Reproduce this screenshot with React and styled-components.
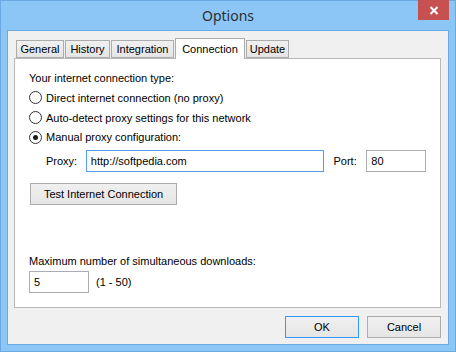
import React from 'react';
import styled, {createGlobalStyle} from "styled-components"

const GlobalStyle = createGlobalStyle`
  html, body {
    margin: 0;
    padding: 0;
    background: #ffffff;
  }
  body {
    font-family: "Liberation Sans", Arial, sans-serif;
    font-size: 11px;
    color: #000;
  }
`
const Window = styled.div`
  position: relative;
  width: 456px;
  height: 352px;
  box-sizing: border-box;
  background: #8cc6f7;
  border: 1px solid #6aa9e2;
  display: flex;
  flex-direction: column;
`
const TitleBar = styled.div`
  position: relative;
  height: 29px;
  display: flex;
  align-items: center;
  justify-content: center;
`
const Title = styled.span`
  font-family: "Noto Sans", "Open Sans", sans-serif;
  font-size: 14px;
  color: #2e2e2e;
  margin-top: -1px;
`
const CloseButton = styled.div`
  position: absolute;
  top: -1px;
  right: 6px;
  width: 31px;
  height: 20px;
  background: #c75050;
  display: flex;
  align-items: center;
  justify-content: center;
`
const Body = styled.div`
  flex: 1;
  margin: 0 6px 6px 6px;
  border: 1px solid #6aa9e2;
  background: #f0f0f0;
  padding: 7px 7px 0 6px;
  display: flex;
  flex-direction: column;
`
const TabStrip = styled.div`
  display: flex;
  align-items: flex-end;
  padding-left: 2px;
`
const Tab = styled.div`
  position: relative;
  box-sizing: border-box;
  width: ${p => p.w}px;
  height: ${p => (p.active ? 21 : 18)}px;
  margin-bottom: ${p => (p.active ? -1 : 0)}px;
  margin-right: 1px;
  z-index: ${p => (p.active ? 2 : 1)};
  border: 1px solid #acacac;
  border-bottom: ${p => (p.active ? "none" : "1px solid #acacac")};
  background: ${p => (p.active ? "#ffffff" : "linear-gradient(#f0f0f0, #e5e5e5)")};
  display: flex;
  justify-content: center;
  align-items: ${p => (p.active ? "flex-start" : "center")};
  padding-top: ${p => (p.active ? 2 : 0)}px;
  white-space: nowrap;
  line-height: 16px;
`
const Panel = styled.div`
  height: 250px;
  box-sizing: border-box;
  background: #ffffff;
  border: 1px solid #b9b9b9;
  padding: 10px 14px 14px 14px;
  display: flex;
  flex-direction: column;
`
const Label = styled.div`
  height: 18px;
  line-height: 18px;
  white-space: nowrap;
`
const RadioRow = styled.div`
  height: ${p => p.h}px;
  display: flex;
  align-items: center;
  white-space: nowrap;
`
const RadioCircle = styled.span`
  box-sizing: border-box;
  width: 13px;
  height: 13px;
  border-radius: 50%;
  border: 1px solid #333333;
  background: #ffffff;
  margin-right: 4px;
  display: flex;
  align-items: center;
  justify-content: center;

  &::after {
    content: "";
    display: ${p => (p.checked ? "block" : "none")};
    width: 5px;
    height: 5px;
    border-radius: 50%;
    background: #1a1a1a;
  }
`
const ProxyRow = styled.div`
  margin-top: 3px;
  display: flex;
  align-items: center;
  padding-left: 17px;
`
const FieldLabel = styled.span`
  width: ${p => p.w}px;
  margin-left: ${p => p.ml || 0}px;
`
const Input = styled.div`
  box-sizing: border-box;
  width: ${p => p.w}px;
  height: 22px;
  border: 1px solid ${p => (p.focused ? "#569de5" : "#abadb3")};
  background: #ffffff;
  padding-left: 4px;
  display: flex;
  align-items: center;
  white-space: nowrap;
`
const Button = styled.div`
  box-sizing: border-box;
  width: ${p => p.w}px;
  height: 22px;
  border: 1px solid ${p => (p.primary ? "#3399ff" : "#acacac")};
  background: linear-gradient(#f0f0f0, #e5e5e5);
  display: flex;
  align-items: center;
  justify-content: center;
  white-space: nowrap;
`
const TestButton = styled(Button)`
  margin-top: 11px;
  margin-left: 1px;
`
const Downloads = styled.div`
  margin-top: auto;
`
const InlineRow = styled.div`
  margin-top: 1px;
  display: flex;
  align-items: center;
  gap: 7px;
`
const Footer = styled.div`
  display: flex;
  justify-content: flex-end;
  gap: 8px;
  margin-top: 8px;
`

const App = () => {
    const tabs = [
        {name: "General", w: 48},
        {name: "History", w: 45},
        {name: "Integration", w: 63},
        {name: "Connection", w: 70, active: true},
        {name: "Update", w: 43},
    ]
    return (
        <>
            <GlobalStyle/>
            <Window>
                <TitleBar>
                    <Title>Options</Title>
                    <CloseButton>
                        <svg width="10" height="9" viewBox="0 0 10 9">
                            <path d="M1.5 1 L8.5 8 M8.5 1 L1.5 8" stroke="#fff" strokeWidth="2"/>
                        </svg>
                    </CloseButton>
                </TitleBar>
                <Body>
                    <TabStrip>
                        {tabs.map(t => (
                            <Tab key={t.name} w={t.w} active={t.active}>{t.name}</Tab>
                        ))}
                    </TabStrip>
                    <Panel>
                        <Label>Your internet connection type:</Label>
                        <RadioRow h={21}><RadioCircle/>Direct internet connection (no proxy)</RadioRow>
                        <RadioRow h={19}><RadioCircle/>Auto-detect proxy settings for this network</RadioRow>
                        <RadioRow h={20}><RadioCircle checked/>Manual proxy configuration:</RadioRow>
                        <ProxyRow>
                            <FieldLabel w={40}>Proxy:</FieldLabel>
                            <Input w={240} focused>http://softpedia.com</Input>
                            <FieldLabel w={33} ml={9}>Port:</FieldLabel>
                            <Input w={60}>80</Input>
                        </ProxyRow>
                        <TestButton w={147}>Test Internet Connection</TestButton>
                        <Downloads>
                            <Label>Maximum number of simultaneous downloads:</Label>
                            <InlineRow>
                                <Input w={60}>5</Input>
                                <span>(1 - 50)</span>
                            </InlineRow>
                        </Downloads>
                    </Panel>
                    <Footer>
                        <Button w={74} primary>OK</Button>
                        <Button w={74}>Cancel</Button>
                    </Footer>
                </Body>
            </Window>
        </>
    );
};

export default App;
